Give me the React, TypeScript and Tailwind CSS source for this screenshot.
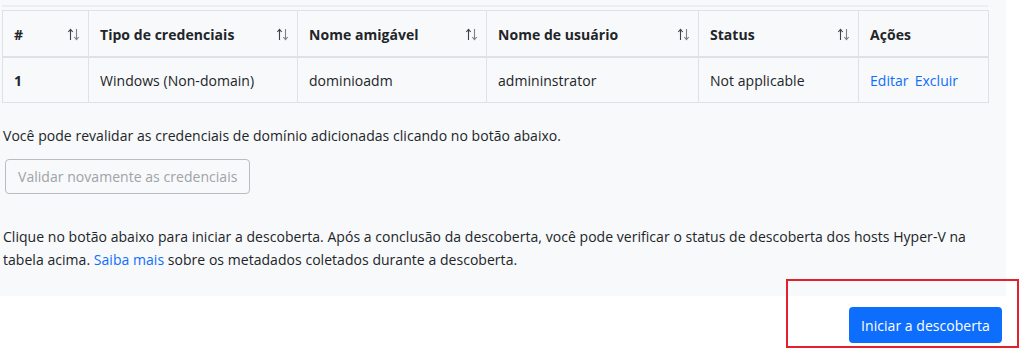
import React from "react";

const cols = [
  { label: "#", w: "w-[86px]", sort: true },
  { label: "Tipo de credenciais", w: "w-[209px]", sort: true },
  { label: "Nome amigável", w: "w-[189px]", sort: true },
  { label: "Nome de usuário", w: "w-[212px]", sort: true },
  { label: "Status", w: "w-[160px]", sort: true },
  { label: "Ações", w: "w-[130px]", sort: false },
];

function SortIcon() {
  return (
    <svg width="13" height="13" viewBox="0 0 13 13" className="shrink-0">
      <path d="M3.5 12V1.5M1.3 4L3.5 1.3 5.7 4" stroke="#3d4349" strokeWidth="1.1" fill="none" />
      <path d="M9.5 1v10.5M7.3 9L9.5 11.7 11.7 9" stroke="#7b8187" strokeWidth="1.1" fill="none" />
    </svg>
  );
}

export default function App() {
  return (
    <div
      className="relative w-[1024px] h-[352px] bg-white text-[#212529] text-[14px] tracking-[0.04px] overflow-hidden"
      style={{ fontFamily: '"Segoe UI", "Open Sans", Arial, sans-serif' }}
    >
      {/* gray panel */}
      <div className="w-[1006px] bg-[#f8f9fa] pt-[5px] pb-[25px]">
        <div className="ml-[2px] w-[986px] h-[2px] bg-[#eceef1]" />
        <table className="ml-[2px] mt-[3px] w-[986px] border-collapse table-fixed">
          <thead>
            <tr className="h-[46px]">
              {cols.map((c) => (
                <th
                  key={c.label}
                  className={`${c.w} border border-[#dee2e6] border-b-2 pl-[11px] pr-[8px] pt-[3px] text-left text-[14px] font-bold align-middle`}
                >
                  <div className="flex items-center justify-between">
                    <span>{c.label}</span>
                    {c.sort && <SortIcon />}
                  </div>
                </th>
              ))}
            </tr>
          </thead>
          <tbody>
            <tr className="h-[46px]">
              <td className="border border-[#dee2e6] px-[11px] pt-[2px] font-bold">1</td>
              <td className="border border-[#dee2e6] px-[11px] pt-[2px]">Windows (Non-domain)</td>
              <td className="border border-[#dee2e6] px-[11px] pt-[2px]">dominioadm</td>
              <td className="border border-[#dee2e6] px-[11px] pt-[2px]">admininstrator</td>
              <td className="border border-[#dee2e6] px-[11px] pt-[2px]">Not applicable</td>
              <td className="border border-[#dee2e6] px-[11px] pt-[2px]">
                <span className="text-[#0d6efd]">Editar</span>
                <span className="text-[#0d6efd] ml-[6px]">Excluir</span>
              </td>
            </tr>
          </tbody>
        </table>

        <p className="mt-[22px] ml-[3px] leading-[22px]">
          Você pode revalidar as credenciais de domínio adicionadas clicando no botão abaixo.
        </p>
        <button className="mt-[12px] ml-[5px] h-[35px] px-[12px] border border-[#b8bdc2] rounded-[4px] text-[#9ea3a8] bg-transparent">
          Validar novamente as credenciais
        </button>

        <p className="mt-[31px] ml-[3px] w-[985px] leading-[23px]">
          Clique no botão abaixo para iniciar a descoberta. Após a conclusão da descoberta, você pode verificar o
          status de descoberta dos hosts Hyper-V na tabela acima. <a className="text-[#0d6efd]">Saiba mais</a> sobre os
          metadados coletados durante a descoberta.
        </p>
      </div>

      <div className="flex justify-end pr-[22px] pt-[11px]">
        <button className="h-[36px] w-[153px] rounded-[4px] bg-[#0d6efd] text-white">
          Iniciar a descoberta
        </button>
      </div>

      {/* annotation box */}
      <div className="absolute left-[786px] top-[279px] w-[233px] h-[69px] border-2 border-[#e5202e]" />
    </div>
  );
}
